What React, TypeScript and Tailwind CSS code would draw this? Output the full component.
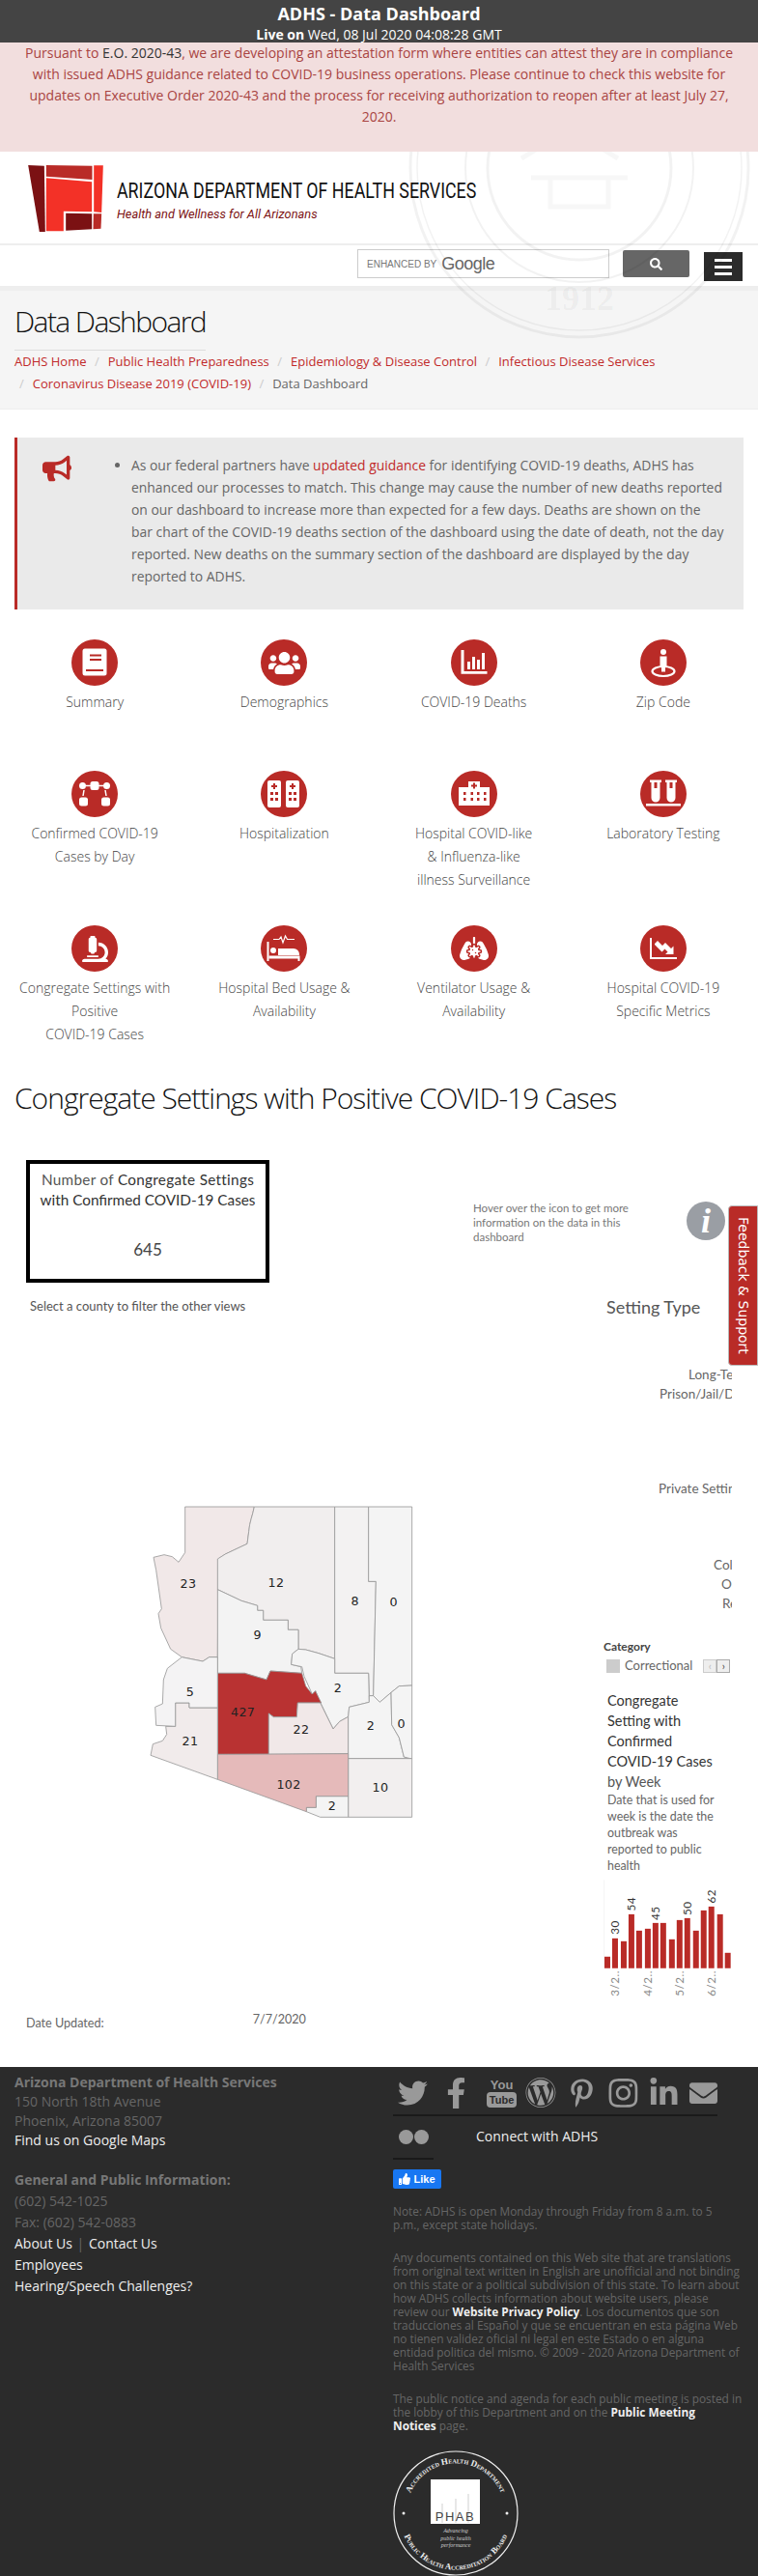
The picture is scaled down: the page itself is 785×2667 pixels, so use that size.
import React from 'react';
import {
  FaTwitter, FaFacebookF, FaWordpress, FaPinterestP, FaInstagram, FaLinkedinIn,
  FaEnvelope, FaBullhorn, FaUsers, FaMicroscope, FaLungsVirus, FaThumbsUp, FaSearch,
} from 'react-icons/fa';

const W = 'fill-white';

function IconBook() {
  return (
    <svg viewBox="0 0 48 48" className="w-12 h-12">
      <rect x="11.500" y="9.500" width="25" height="28" rx="2.500" className={W} />
      <rect x="19" y="15.500" width="12" height="2" className="fill-[#b92b27]" />
      <rect x="19" y="20" width="12" height="2" className="fill-[#b92b27]" />
      <rect x="15" y="31" width="18" height="2" className="fill-[#b92b27]" />
    </svg>
  );
}

function IconDeaths() {
  return (
    <svg viewBox="0 0 48 48" className="w-12 h-12">
      <path d="M10.500 11h3v22h24v2.800h-27z" className={W} />
      <rect x="17" y="23" width="3" height="8" className={W} />
      <rect x="22" y="18" width="3" height="13" className={W} />
      <rect x="27" y="21" width="3" height="10" className={W} />
      <rect x="32" y="14" width="3" height="17" className={W} />
    </svg>
  );
}

function IconZip() {
  return (
    <svg viewBox="0 0 48 48" className="w-12 h-12">
      <circle cx="24" cy="13" r="3" className={W} />
      <path d="M20.500 17.500h7v11h-1.500v5h-4v-5h-1.500z" className={W} />
      <ellipse cx="24" cy="33" rx="11.500" ry="5" fill="none" stroke="white" strokeWidth="2.200" />
    </svg>
  );
}

function IconNetwork() {
  return (
    <svg viewBox="0 0 48 48" className="w-12 h-12">
      <rect x="19.500" y="11" width="9" height="9" rx="2.500" className={W} />
      <circle cx="11.500" cy="15.500" r="3.500" className={W} />
      <circle cx="36.500" cy="15.500" r="3.500" className={W} />
      <rect x="8" y="27.500" width="9" height="9" rx="2.500" className={W} />
      <rect x="31" y="27.500" width="9" height="9" rx="2.500" className={W} />
      <path d="M15 15.500h5M28 15.500h5M13 20l-1 6M35 20l1 6" stroke="white" strokeWidth="1.500" fill="none" />
    </svg>
  );
}

function IconTowers() {
  const tower = (x: number) => (
    <g key={x}>
      <rect x={x} y="10" width="14" height="28" rx="2" className={W} />
      <path d={`M${x + 6} 13h2v2h2v2h-2v2h-2v-2h-2v-2h2z`} className="fill-[#b92b27]" />
      {[22, 28].map((y) => (
        <g key={y}>
          <rect x={x + 3} y={y} width="3" height="3" className="fill-[#b92b27]" />
          <rect x={x + 8} y={y} width="3" height="3" className="fill-[#b92b27]" />
        </g>
      ))}
    </g>
  );
  return <svg viewBox="0 0 48 48" className="w-12 h-12">{tower(7)}{tower(26)}</svg>;
}

function IconHospital() {
  return (
    <svg viewBox="0 0 48 48" className="w-12 h-12">
      <path d="M8 17h10v-6h12v6h10v19H8z" className={W} />
      <path d="M23 12.500h2v2h2v2h-2v2h-2v-2h-2v-2h2z" className="fill-[#b92b27]" />
      {[22, 28].map((y) =>
        [13, 20.500, 27, 34].map((x) => (
          <rect key={`${x}-${y}`} x={x} y={y} width="2.500" height="3" className="fill-[#b92b27]" />
        ))
      )}
    </svg>
  );
}

function IconTubes() {
  return (
    <svg viewBox="0 0 48 48" className="w-12 h-12">
      <path d="M10 9.500h12v2.500h-1.500v16a4.500 4.500 0 0 1-9 0V12H10z" className={W} />
      <path d="M26 9.500h12v2.500h-1.500v16a4.500 4.500 0 0 1-9 0V12H26z" className={W} />
      <rect x="14.500" y="12" width="3" height="6" className="fill-[#b92b27]" />
      <rect x="30.500" y="12" width="3" height="6" className="fill-[#b92b27]" />
      <rect x="6" y="34" width="36" height="2.500" className={W} />
    </svg>
  );
}

function IconBed() {
  return (
    <svg viewBox="0 0 48 48" className="w-12 h-12">
      <path d="M13 14.500h6l2-2.500 2 6 2.500-7 2 3.500H35" stroke="white" strokeWidth="1.200" fill="none" />
      <rect x="6.500" y="17" width="2" height="20" className={W} />
      <circle cx="13" cy="26" r="3" className={W} />
      <path d="M8.500 31.500H40.500V37h-2v-2.500H8.500z" className={W} />
      <path d="M18 24h16a6 6 0 0 1 6 6v1H18z" className={W} />
    </svg>
  );
}

function IconMetrics() {
  return (
    <svg viewBox="0 0 48 48" className="w-12 h-12">
      <path d="M10 13h2v20h26v2H10z" className={W} />
      <path d="M15 19l3-3 5 5 3-3 6 6 2.500-2.500V30H26l2.500-2.500-3-3-3 3-7.500-7.500z" className={W} />
    </svg>
  );
}

const rows = [
  [
    { label: ['Summary'], icon: <IconBook /> },
    { label: ['Demographics'], icon: <FaUsers className="text-white text-[33px]" /> },
    { label: ['COVID-19 Deaths'], icon: <IconDeaths /> },
    { label: ['Zip Code'], icon: <IconZip /> },
  ],
  [
    { label: ['Confirmed COVID-19', 'Cases by Day'], icon: <IconNetwork /> },
    { label: ['Hospitalization'], icon: <IconTowers /> },
    { label: ['Hospital COVID-like', '& Influenza-like', 'illness Surveillance'], icon: <IconHospital /> },
    { label: ['Laboratory Testing'], icon: <IconTubes /> },
  ],
  [
    { label: ['Congregate Settings with', 'Positive', 'COVID-19 Cases'], icon: <FaMicroscope className="text-white text-[27px]" /> },
    { label: ['Hospital Bed Usage &', 'Availability'], icon: <IconBed /> },
    { label: ['Ventilator Usage &', 'Availability'], icon: <FaLungsVirus className="text-white text-[30px]" /> },
    { label: ['Hospital COVID-19', 'Specific Metrics'], icon: <IconMetrics /> },
  ],
];

const counties = [
  { fill: '#f1e8e8', d: 'M215 63L430 63C425 90 415 110 413 140L408 178L340 210L318 225L316 530L290 530L270 543L205 530L170 505L140 440L132 395L142 380L125 260L117 220L150 212L175 218L195 235L215 205Z' },
  { fill: '#f1eeee', d: 'M430 63L680 63L680 535L630 518L590 507L567 505L567 445L535 445L535 415L458 415L458 385L440 385L440 370L390 355L316 320L316 225L340 210L408 178L413 140C415 110 425 90 430 63Z' },
  { fill: '#f3f2f2', d: 'M680 63L785 63L785 295L808 295L800 650L787 650L785 580L680 580Z' },
  { fill: '#f4f4f4', d: 'M785 63L920 63L920 618L880 620L855 640L820 670L800 650L808 295L785 295Z' },
  { fill: '#f3f3f3', d: 'M316 320L390 355L440 370L440 385L458 385L458 415L535 415L535 445L567 445L567 505L548 520L545 553L575 560L578 580L480 573L468 600L400 580L316 580Z' },
  { fill: '#f4f4f4', d: 'M567 505L590 507L630 518L680 535L680 580L785 580L787 670L725 685L722 715L695 730L675 753L635 670L620 635L610 645L585 590L578 560L545 553L548 520Z' },
  { fill: '#b93232', d: 'M316 580L400 580L468 600L480 573L578 580L590 620L610 645L620 635L638 672L565 672L562 716L490 716L475 705L475 832L316 832Z' },
  { fill: '#f1e8e8', d: 'M565 672L635 672L675 753L695 730L722 715L722 830L475 832L475 705L490 716L562 716Z' },
  { fill: '#f4f4f4', d: 'M722 715L725 685L787 670L787 650L800 650L820 670L855 640L857 740L880 780L895 840L915 845L722 845Z' },
  { fill: '#f4f4f4', d: 'M855 640L880 620L920 618L920 845L915 845L895 840L880 780L857 740Z' },
  { fill: '#f2efef', d: 'M722 845L920 845L920 1027L722 1027Z' },
  { fill: '#f4f4f4', d: 'M622 962L722 962L722 1027L635 1027L592 1010L592 997L622 997Z' },
  { fill: '#e5baba', d: 'M316 832L722 830L722 962L622 962L622 997L592 997L592 1010L316 910Z' },
  { fill: '#f1ebeb', d: 'M185 672L228 672L228 687L316 687L316 910L108 835L115 800L145 790L158 770L155 745L185 745Z' },
  { fill: '#f4f3f4', d: 'M205 530L270 543L290 530L316 530L316 687L228 687L228 672L185 672L185 745L125 742L122 685L145 675L148 600L160 565Z' },
];

const countyLabels = [
  ['23', 225, 316], ['12', 498, 312], ['8', 743, 370], ['0', 863, 372], ['9', 440, 475], ['5', 231, 650],
  ['2', 690, 638], ['427', 395, 715], ['22', 576, 767], ['2', 792, 757], ['0', 887, 749], ['21', 231, 805],
  ['102', 537, 938], ['10', 822, 949], ['2', 672, 1006],
] as const;

const bars = [
  [138, 1044], [162, 987], [189, 996], [213, 912], [237, 963], [264, 957], [288, 939], [312, 939],
  [339, 990], [363, 930], [387, 924], [414, 963], [438, 900], [462, 888], [489, 912], [513, 1032],
];

const barLabels = [['30', 171, 975], ['54', 222, 902], ['45', 297, 930], ['50', 396, 915], ['62', 471, 878]] as const;
const dates = [['3/2..', 171], ['4/2..', 273], ['5/2..', 372], ['6/2..', 471]] as const;

function CountyMap() {
  return (
    <svg viewBox="0 0 990 1080" className="w-[330px] h-[360px]">
      {counties.map((c, i) => (
        <path key={i} d={c.d} fill={c.fill} stroke="#999" strokeWidth="2.500" />
      ))}
      {countyLabels.map(([t, x, y], i) => (
        <text key={i} x={x} y={y} textAnchor="middle" fontSize="38" fill="#222" fontFamily="'DejaVu Sans', sans-serif" letterSpacing="1">
          {t}
        </text>
      ))}
    </svg>
  );
}

function WeekChart() {
  return (
    <svg viewBox="135 805 400 365" className="w-[133px] h-[122px]">
      <line x1="137" y1="805" x2="137" y2="1080" stroke="#eee" strokeWidth="2" />
      {bars.map(([x, top]) => (
        <rect key={x} x={x} y={top} width="18" height={1080 - top} fill="#b92b27" />
      ))}
      {barLabels.map(([t, x, y]) => (
        <text key={t} transform={`translate(${x + 12} ${y}) rotate(-90)`} fontSize="35" fill="#333" fontFamily="Lato, sans-serif" letterSpacing="1.500">
          {t}
        </text>
      ))}
      {dates.map(([t, x]) => (
        <text key={t} transform={`translate(${x + 12} 1167) rotate(-90)`} fontSize="35" fill="#888" fontFamily="Lato, sans-serif" letterSpacing="1.500">
          {t}
        </text>
      ))}
    </svg>
  );
}

function AgencyLogo() {
  return (
    <svg viewBox="87 63 233 207" className="w-[78px] h-[69px] shrink-0">
      <polygon points="87,63 137,65 140,270 122,270" fill="#7b1113" />
      <polygon points="143,63 286,65 286,108 143,98" fill="#b92b27" />
      <polygon points="143,103 285,115 285,208 197,206 197,268 143,268" fill="#f33127" />
      <polygon points="204,212 285,214 285,262 204,266" fill="#7b1113" />
      <polygon points="291,64 320,64 315,210 291,208" fill="#f33127" />
      <polygon points="290,214 315,214 313,260 289,262" fill="#b92b27" />
    </svg>
  );
}

function StateSeal() {
  return (
    <svg viewBox="0 0 360 360" className="w-[360px] h-[360px]">
      <defs>
        <path id="sealText" d="M180 30a150 150 0 1 1-.1 0" />
      </defs>
      <g fill="none" stroke="#000" strokeOpacity="0.05">
        <circle cx="180" cy="180" r="175" strokeWidth="3" />
        <circle cx="180" cy="180" r="168" strokeWidth="1.500" />
        <circle cx="180" cy="180" r="118" strokeWidth="2" />
        <circle cx="180" cy="180" r="95" strokeWidth="3" />
        <path d="M100 120l30-25 30 20 30-30 30 25 40 20M120 170l50-30 50 30M130 190h100M150 190v30h60v-30" strokeWidth="5" strokeOpacity="0.03" />
      </g>
      <text fontSize="30" fontWeight="700" fontFamily="'Liberation Serif', serif" fill="#000" fillOpacity="0.05" letterSpacing="5">
        <textPath href="#sealText" startOffset="3%">ARIZONA</textPath>
      </text>
      <text x="180" y="327" textAnchor="middle" fontSize="36" fontWeight="700" fontFamily="'Liberation Serif', serif" fill="#000" fillOpacity="0.05">
        1912
      </text>
    </svg>
  );
}

function PhabSeal() {
  return (
    <svg viewBox="0 0 130 130" className="w-[130px] h-[130px]">
      <defs>
        <path id="phabTop" d="M18 84a51 51 0 1 1 94 0" />
        <path id="phabBottom" d="M10 84a58 58 0 0 0 110 0" />
      </defs>
      <circle cx="65" cy="65" r="64" fill="none" stroke="#eee" strokeWidth="1.200" />
      <text fontSize="9" fontWeight="700" fill="#eee" fontVariant="small-caps" fontFamily="'Liberation Serif', serif">
        <textPath href="#phabTop" startOffset="50%" textAnchor="middle">Accredited Health Department</textPath>
      </text>
      <text fontSize="9" fontWeight="700" fill="#eee" fontVariant="small-caps" fontFamily="'Liberation Serif', serif">
        <textPath href="#phabBottom" startOffset="50%" textAnchor="middle">Public Health Accreditation Board</textPath>
      </text>
      <circle cx="11" cy="65" r="1.500" fill="#eee" />
      <circle cx="118" cy="65" r="1.500" fill="#eee" />
      <rect x="39" y="30" width="51" height="46" fill="#fff" />
      <path d="M51 55v20M65 50v25M78 45v30" stroke="#bbb" strokeWidth="0.700" />
      <text x="64.500" y="73" textAnchor="middle" fontSize="13" fill="#444" fontFamily="'Liberation Sans', sans-serif" letterSpacing="1.500">PHAB</text>
      <g fontSize="6" fontStyle="italic" fill="#ccc" textAnchor="middle" fontFamily="'Liberation Serif', serif">
        <text x="65" y="85">Advancing</text>
        <text x="65" y="93">public health</text>
        <text x="65" y="100">performance</text>
      </g>
    </svg>
  );
}

function Crumb({ children, plain }: { children: React.ReactNode; plain?: boolean }) {
  return (
    <span className="inline-block pl-[5px]">
      <span className="text-[#ccc] pr-[9px]">/</span>
      <span className={plain ? 'text-[#666]' : ''}>{children}</span>
    </span>
  );
}

export default function App() {
  return (
    <div className="relative w-[785px] h-[2667px] overflow-hidden bg-white font-['Open_Sans',sans-serif] text-[14px] text-[#555]">
      <div className="h-[44px] bg-[#444] text-white text-center pt-[1px]">
        <div className="text-[18px] font-bold leading-[26px]">ADHS - Data Dashboard</div>
        <div className="text-[14px] leading-[17px]"><b>Live on</b> Wed, 08 Jul 2020 04:08:28 GMT</div>
      </div>

      <div className="h-[113px] bg-[#f2dede] text-[#a94442] text-center text-[14px] leading-[22px] px-[15px]">
        Pursuant to <span className="text-[#333]">E.O. 2020-43</span>, we are developing an attestation form where entities can attest they are in compliance with issued ADHS guidance related to COVID-19 business operations. Please continue to check this website for updates on Executive Order 2020-43 and the process for receiving authorization to reopen after at least July 27, 2020.
      </div>

      <div className="relative overflow-hidden">
        <div className="h-[97px] flex items-start pl-[29px] pt-[14px] border-b-2 border-[#eee]">
          <AgencyLogo />
          <div className="ml-[14px] mt-[14px]">
            <div className="origin-left scale-x-[0.81] whitespace-nowrap font-['Roboto',sans-serif] text-[22px] leading-[26px] text-[#111]">
              ARIZONA DEPARTMENT OF HEALTH SERVICES
            </div>
            <div className="origin-left scale-x-[0.95] whitespace-nowrap font-['Roboto',sans-serif] italic text-[13.500px] leading-[18px] mt-[1px] text-[#7b1113]">
              Health and Wellness for All Arizonans
            </div>
          </div>
        </div>
        <div className="h-[47px] flex justify-end items-start pr-[16px] pt-[4px] border-b-[5px] border-[#eee]">
          <div className="w-[261px] h-[30px] border border-[#ccc] flex items-center pl-[9px] gap-[5px] text-[#777] font-['Liberation_Sans',sans-serif]">
            <span className="text-[10px]">ENHANCED BY</span>
            <span className="text-[18px] tracking-[-0.5px] text-[#666]">Google</span>
          </div>
          <div className="w-[69px] h-[28px] ml-[14px] bg-[#666] rounded-[2px] flex items-center justify-center mt-[1px]">
            <FaSearch className="text-white text-[13px]" />
          </div>
          <div className="w-[40px] h-[30px] ml-[15px] mt-[3px] bg-[#2b2b2b] flex flex-col items-center justify-center gap-[4px]">
            <span className="w-[18px] h-[3px] bg-white" />
            <span className="w-[18px] h-[3px] bg-white" />
            <span className="w-[18px] h-[3px] bg-white" />
          </div>
        </div>
        <div className="h-[123px] bg-[#f5f5f5] border-b border-[#eee] px-[15px]">
          <h1 className="inline-block font-light text-[30px] leading-[44px] text-[#111] tracking-[-1.6px] pt-[10px] pb-[7px] border-b border-[#ddd] box-content">
            Data Dashboard
          </h1>
          <div className="text-[13px] leading-[23px] text-[#c12a2a]">
            <span>ADHS Home</span> <Crumb>Public Health Preparedness</Crumb> <Crumb>Epidemiology &amp; Disease Control</Crumb> <Crumb>Infectious Disease Services</Crumb> <Crumb>Coronavirus Disease 2019 (COVID-19)</Crumb> <Crumb plain>Data Dashboard</Crumb>
          </div>
        </div>
        <div className="absolute left-[420px] top-[-163px] pointer-events-none">
          <StateSeal />
        </div>
      </div>

      <div className="mt-[29px] mx-[15px] h-[178px] bg-[#eaeaea] border-l-[3px] border-[#b92b27] flex pl-[26px] pt-[17px]">
        <FaBullhorn className="text-[#b92b27] text-[30px] shrink-0" />
        <ul className="list-disc ml-[62px] w-[622px] text-[13.900px] leading-[23px] text-[#666] marker:text-[#666]">
          <li>
            As our federal partners have <span className="text-[#c12a2a]">updated guidance</span> for identifying COVID-19 deaths, ADHS has enhanced our processes to match. This change may cause the number of new deaths reported on our dashboard to increase more than expected for a few days. Deaths are shown on the<br />bar chart of the COVID-19 deaths section of the dashboard using the date of death, not the day reported. New deaths on the summary section of the dashboard are displayed by the day reported to ADHS.
          </li>
        </ul>
      </div>

      <div className="mt-[31px]">
        {rows.map((row, r) => (
          <div key={r} className="grid grid-cols-4 pb-[35px]">
            {row.map((item) => (
              <div key={item.label[0]} className="flex flex-col items-center text-center">
                <div className="w-12 h-12 rounded-full bg-[#b92b27] flex items-center justify-center overflow-hidden">
                  {item.icon}
                </div>
                <div className="mt-[5px] min-h-[48px] font-light text-[14px] leading-[24px] text-[#444]">
                  {item.label.map((line) => <div key={line}>{line}</div>)}
                </div>
              </div>
            ))}
          </div>
        ))}
      </div>

      <h2 className="-mt-[3px] pl-[15px] font-light text-[30px] leading-[44px] text-[#111] tracking-[-1px]">
        Congregate Settings with Positive COVID-19 Cases
      </h2>

      <div className="flex h-[883px] mt-[42px] font-['Lato',sans-serif]">
        <div className="w-[470px] pl-[27px]">
          <div className="w-[252px] h-[127px] border-[4px] border-black text-center text-[15.300px] leading-[21px] pt-[6px] text-[#333]">
            <div className="tracking-[0.3px]"><span className="text-[#555]">Number of</span> Congregate Settings</div>
            <div>with Confirmed COVID-19 Cases</div>
            <div className="mt-[30px] text-[17px] text-[#444]">645</div>
          </div>
          <div className="mt-[15px] ml-[4px] text-[13px] leading-[18px] text-[#555]">Select a county to filter the other views</div>
          <div className="mt-[178px] -ml-[27px] pl-[120px]">
            <CountyMap />
          </div>
        </div>

        <div className="w-[288px]">
          <div className="flex items-start">
            <div className="ml-[20px] mt-[42px] w-[170px] text-[11.500px] leading-[15px] text-[#777]">
              Hover over the icon to get more information on the data in this dashboard
            </div>
            <div className="ml-[51px] mt-[43px] w-10 h-10 shrink-0 rounded-full bg-[#9a9ea4] flex items-center justify-center text-white italic font-bold text-[36px] font-['Liberation_Serif',serif]">
              i
            </div>
          </div>
          <div className="mt-[53px] ml-[158px] text-[18px] leading-[24px] text-[#555]">Setting Type</div>
          <div className="overflow-hidden whitespace-nowrap text-[13.500px] leading-[20px] text-[#666]">
            <div className="mt-[48px] ml-[243px]">Long-Term Care</div>
            <div className="ml-[213px]">Prison/Jail/Detention</div>
            <div className="mt-[78px] ml-[212px]">Private Setting</div>
            <div className="mt-[59px] ml-[269px]">College</div>
            <div className="ml-[277px]">Outdoor</div>
            <div className="ml-[278px]">Residential</div>
          </div>
          <div className="mt-[26px] ml-[155px] text-[12px] leading-[18px] font-bold text-[#444]">Category</div>
          <div className="ml-[158px] flex items-center h-[18px] mt-[2px]">
            <span className="w-[14px] h-[14px] bg-[#ccc]" />
            <span className="ml-[5px] text-[13px] text-[#666]">Correctional</span>
            <span className="ml-[11px] w-[14px] h-[14px] bg-[#eee] border border-[#ccc] text-[#bbb] text-[11px] leading-[11px] text-center">‹</span>
            <span className="w-[14px] h-[14px] bg-[#eee] border border-[#aaa] text-[#444] text-[11px] leading-[11px] text-center">›</span>
          </div>
          <div className="ml-[159px] mt-[16px] w-[120px] text-[14.500px] leading-[21px] text-[#333]">
            Congregate Setting with Confirmed COVID-19 Cases
            <div className="text-[#555]">by Week</div>
          </div>
          <div className="ml-[159px] w-[118px] text-[12.400px] leading-[17px] text-[#666]">
            Date that is used for week is the date the outbreak was reported to public health
          </div>
          <div className="ml-[155px] mt-[6px]">
            <WeekChart />
          </div>
        </div>
      </div>

      <div className="h-[56px] flex items-start font-['Lato',sans-serif] text-[12.600px] text-[#666] pl-[27px]">
        <span className="mt-[2px]">Date Updated:</span>
        <span className="ml-[154px] -mt-[2px]">7/7/2020</span>
      </div>

      <footer className="h-[527px] bg-[#2b2b2b] flex pl-[15px] text-[#777]">
        <div className="w-[392px] pt-[6px] text-[14px]">
          <div className="leading-[20px] font-bold">Arizona Department of Health Services</div>
          <div className="leading-[20px] text-[#666]">150 North 18th Avenue</div>
          <div className="leading-[20px] text-[#666]">Phoenix, Arizona 85007</div>
          <div className="leading-[20px] text-[#eee]">Find us on Google Maps</div>
          <div className="mt-[20px] leading-[22px] font-bold">General and Public Information:</div>
          <div className="leading-[22px] text-[#666]">(602) 542-1025</div>
          <div className="leading-[22px] text-[#666]">Fax: (602) 542-0883</div>
          <div className="leading-[22px] text-[#eee]">About Us <span className="text-[#666] px-[1px]">|</span> Contact Us</div>
          <div className="leading-[22px] text-[#eee]">Employees</div>
          <div className="leading-[22px] text-[#eee]">Hearing/Speech Challenges?</div>
        </div>

        <div className="w-[363px] text-[11.850px] leading-[14px]">
          <div className="w-[336px] h-[51px] flex items-center pt-[4px] border-b-2 border-[#1a1a1a] text-[#999]">
            <FaTwitter className="text-[32px] ml-[5px]" />
            <FaFacebookF className="text-[32px] ml-[14px]" />
            <div className="ml-[16px] w-[32px] flex flex-col items-center font-['Liberation_Sans',sans-serif]">
              <span className="text-[13px] leading-[14px] font-bold">You</span>
              <span className="text-[11px] leading-[16px] font-bold bg-[#999] text-[#2b2b2b] rounded-[4px] px-[3px]">Tube</span>
            </div>
            <FaWordpress className="text-[33px] ml-[9px]" />
            <FaPinterestP className="text-[30px] ml-[12px]" />
            <FaInstagram className="text-[34px] ml-[12px]" />
            <FaLinkedinIn className="text-[32px] ml-[10px]" />
            <FaEnvelope className="text-[30px] ml-[11px]" />
          </div>
          <div className="flex items-center h-[42px]">
            <span className="w-[15px] h-[15px] ml-[6px] rounded-full bg-[#999]" />
            <span className="w-[15px] h-[15px] ml-[1px] rounded-full bg-[#999]" />
            <span className="ml-[49px] text-[14px] text-[#eee]">Connect with ADHS</span>
          </div>
          <div className="w-[42px] border-t-2 border-[#1a1a1a] mt-[1px]" />
          <div className="mt-[10px] w-[50px] h-[20px] bg-[#1877f2] rounded-[2px] flex items-center justify-center gap-[3px] text-white text-[11px] font-bold font-['Liberation_Sans',sans-serif]">
            <FaThumbsUp className="text-[12px]" />Like
          </div>
          <p className="mt-[16px] w-[345px] text-[#666]">Note: ADHS is open Monday through Friday from 8 a.m. to 5 p.m., except state holidays.</p>
          <p className="mt-[20px] text-[#666]">
            Any documents contained on this Web site that are translations from original text written in English are unofficial and not binding on this state or a political subdivision of this state. To learn about how ADHS collects information about website users, please review our <span className="font-bold text-[#eee]">Website Privacy Policy</span>. Los documentos que son traducciones al Español y que se encuentran en esta página Web no tienen validez oficial ni legal en este Estado o en alguna entidad politica del mismo. © 2009 - 2020 Arizona Department of Health Services
          </p>
          <p className="mt-[20px] text-[#666]">
            The public notice and agenda for each public meeting is posted in the lobby of this Department and on the <span className="font-bold text-[#eee]">Public Meeting<br />Notices</span> page.
          </p>
          <div className="mt-[19px]">
            <PhabSeal />
          </div>
        </div>
      </footer>

      <div className="absolute left-[754px] top-[1248px] w-[31px] h-[166px] bg-[#b92b27] border border-[#bbb] rounded-l-[4px] flex items-center justify-center">
        <span className="[writing-mode:vertical-rl] whitespace-nowrap text-white text-[14px] font-['DejaVu_Sans',sans-serif]">Feedback &amp; Support</span>
      </div>
    </div>
  );
}
